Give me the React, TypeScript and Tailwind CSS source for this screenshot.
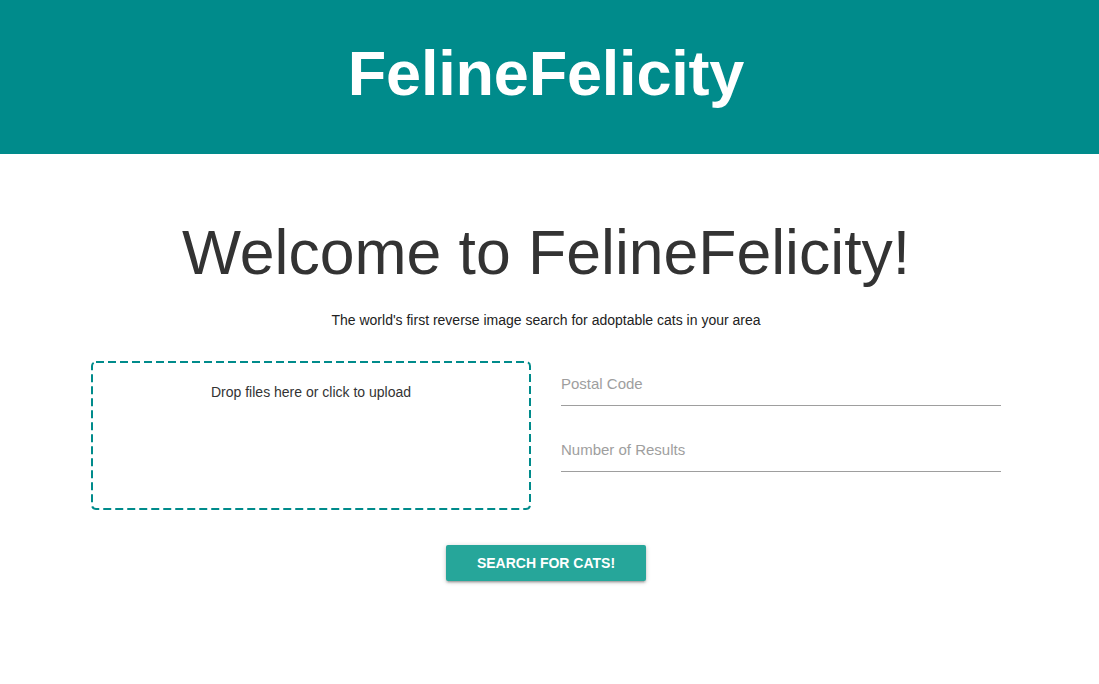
import { useState } from 'react';

const font = "font-['Liberation_Sans',Arial,sans-serif]";

function Dropzone() {
  return (
    <div className="relative w-[440px] h-[149px] px-4 pt-[21px] text-center text-[14px] leading-5 text-[#333] cursor-pointer">
      {/* dashed frame drawn as svg so the dash rhythm matches */}
      <svg className="absolute inset-0 pointer-events-none" width="440" height="149">
        <rect x="1" y="1" width="438" height="147" rx="4" ry="4" fill="none" stroke="#008b8b" strokeWidth="2" strokeDasharray="8 4" />
      </svg>
      Drop files here or click to upload
    </div>
  );
}

function Field({ label }: { label: string }) {
  const [value, setValue] = useState('');
  return (
    <label className="block relative">
      <input
        value={value}
        onChange={(e) => setValue(e.target.value)}
        placeholder={label}
        className="w-full h-[45px] bg-transparent border-b border-[#9e9e9e] text-[15px] text-[#333] placeholder:text-[#9e9e9e] outline-none"
      />
    </label>
  );
}

export default function App() {
  return (
    <div className={`${font} min-h-[684px] bg-white`}>
      <header className="h-[154px] bg-[#008b8b] flex items-center justify-center pr-[7px]">
        <h1 className="text-[63px] font-bold text-white tracking-[-0.2px] leading-none pb-[7px]">FelineFelicity</h1>
      </header>

      <main className="flex flex-col items-center pr-[7px]">
        <h2 className="mt-[63px] text-[62.5px] leading-[70px] text-[#333]">Welcome to FelineFelicity!</h2>
        <p className="mt-[23px] text-[14px] leading-5 text-[#222]">
          The world's first reverse image search for adoptable cats in your area
        </p>

        <div className="mt-[31px] flex gap-[30px]">
          <Dropzone />
          <div className="w-[440px] flex flex-col gap-[21px]">
            <Field label="Postal Code" />
            <Field label="Number of Results" />
          </div>
        </div>

        <button className="mt-[35px] w-[200px] h-[36px] rounded-[2px] bg-[#26a69a] text-white text-[14px] font-bold uppercase shadow-[0_2px_2px_0_rgba(0,0,0,0.14),0_3px_1px_-2px_rgba(0,0,0,0.12),0_1px_5px_0_rgba(0,0,0,0.2)]">
          Search for cats!
        </button>
      </main>
    </div>
  );
}
